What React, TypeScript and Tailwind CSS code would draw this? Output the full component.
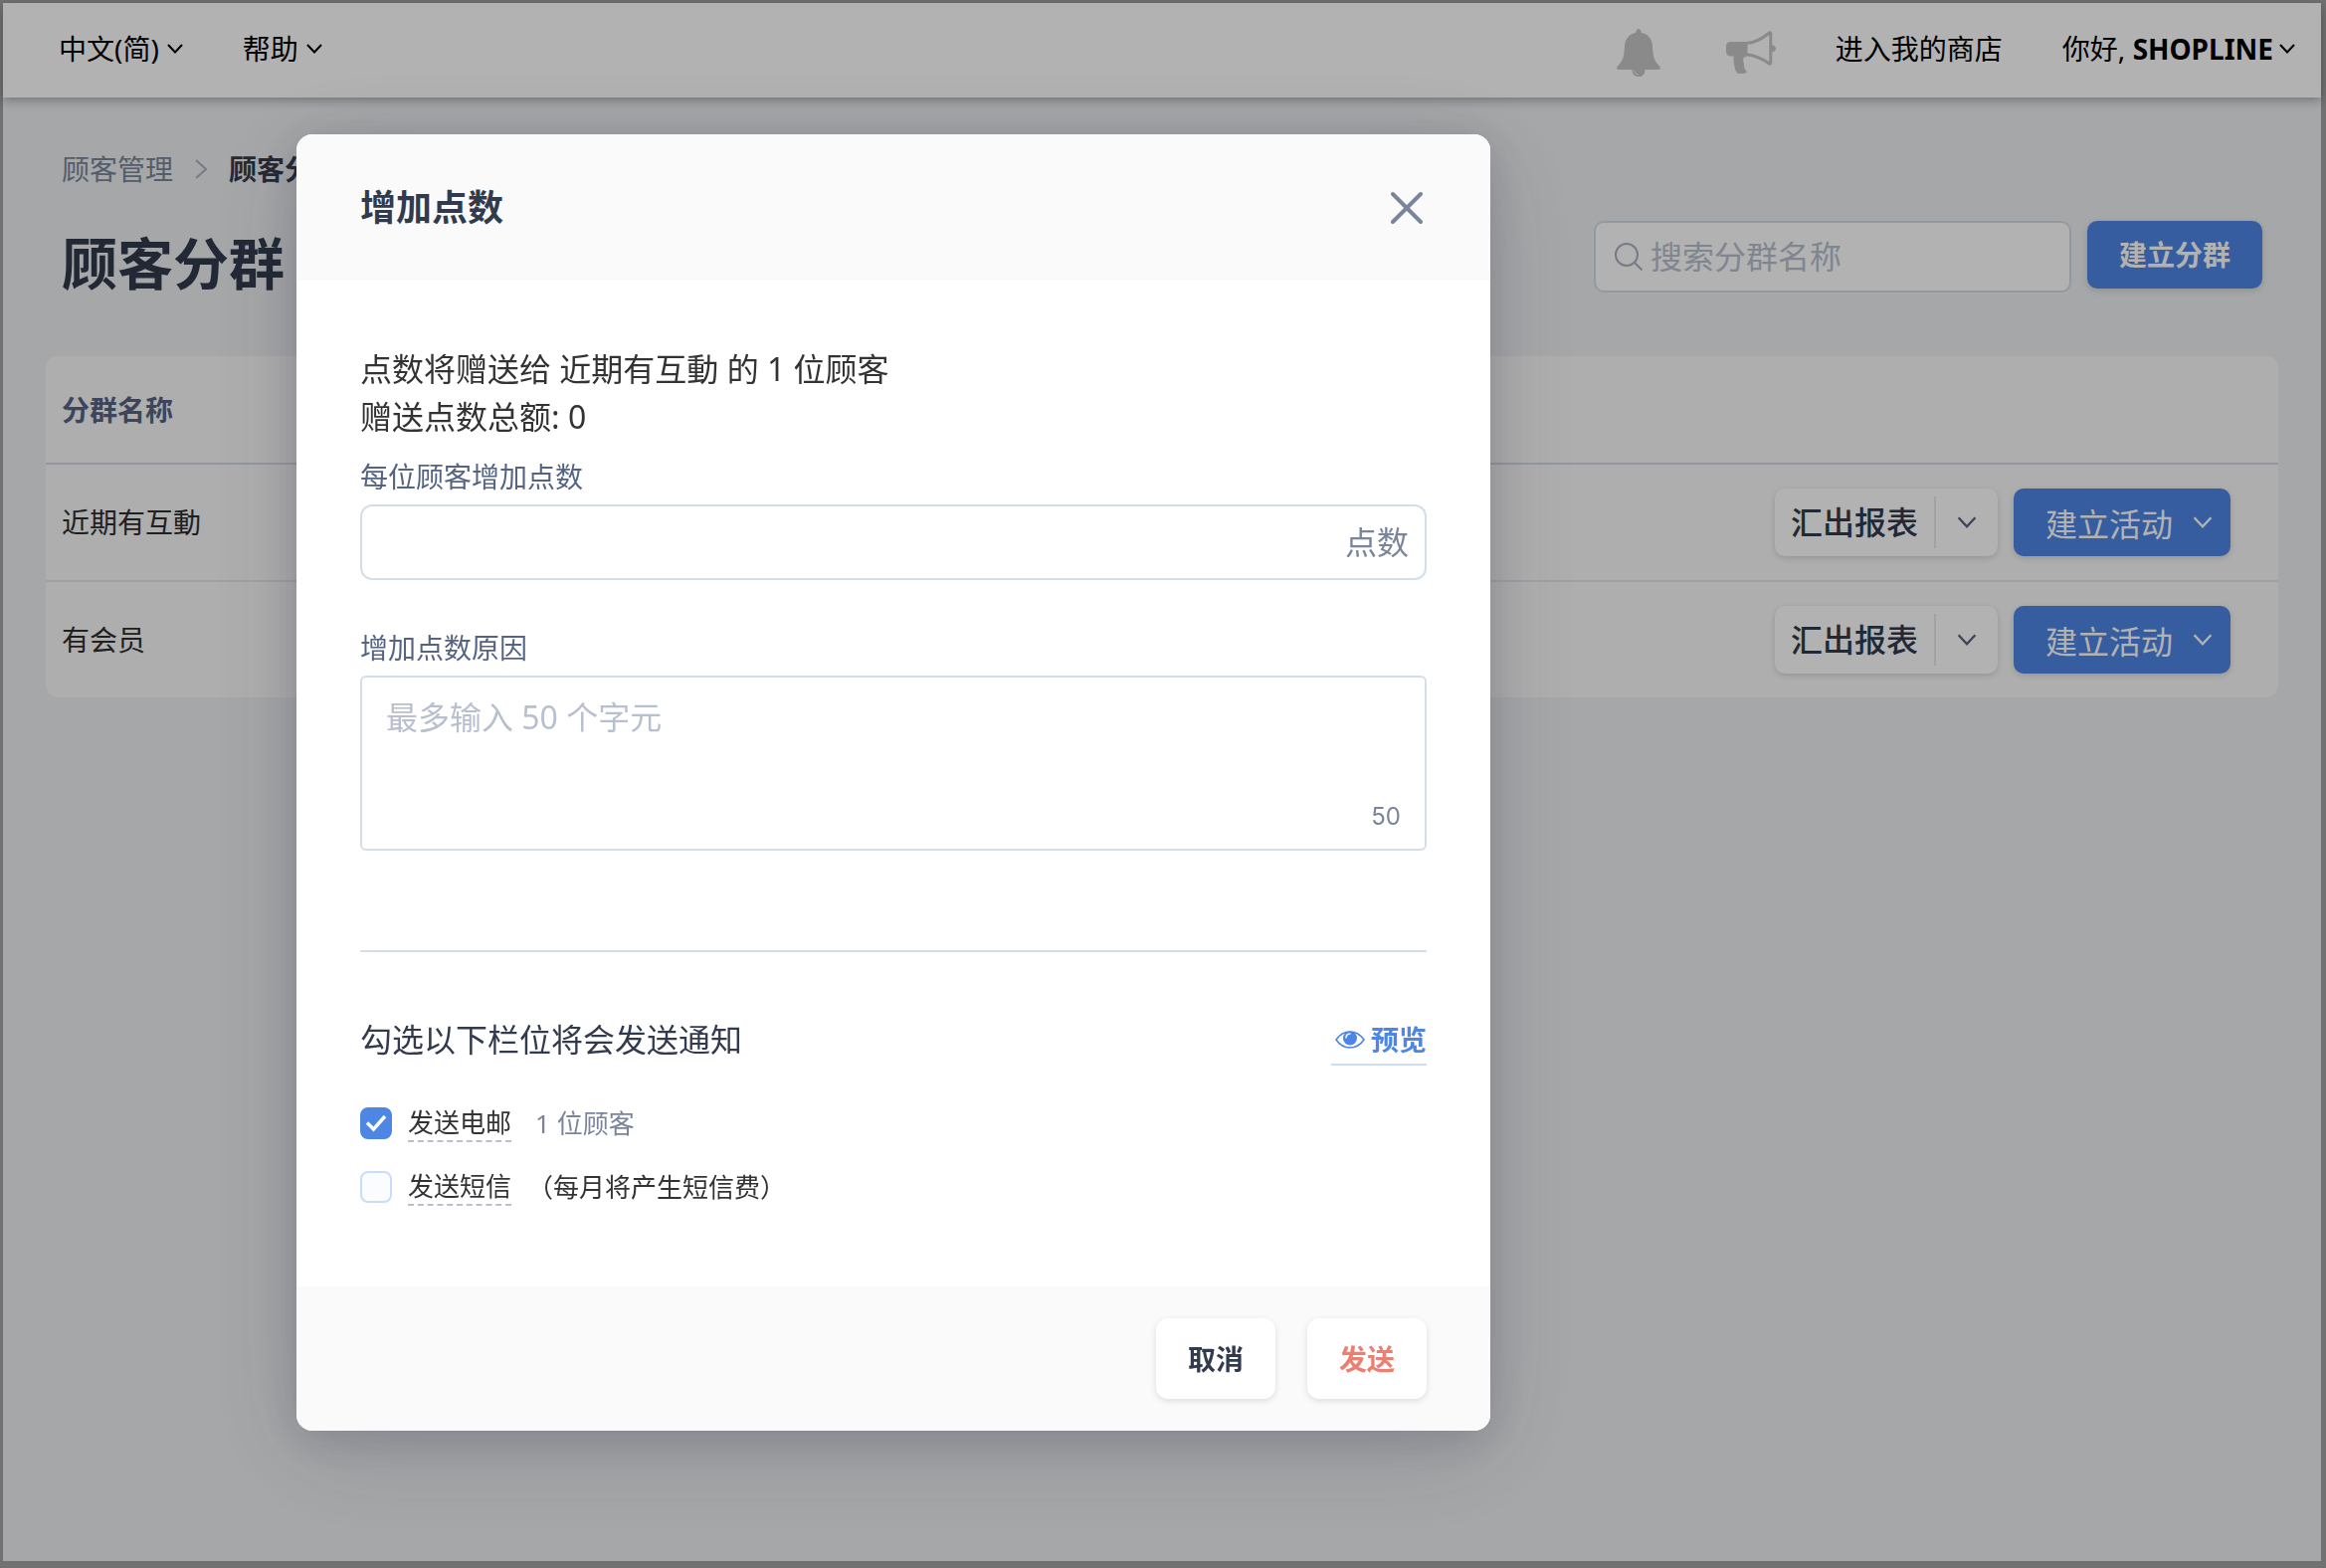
import { useState } from 'react';
import type { ReactNode } from 'react';

const groups = ['近期有互動', '有会员'];

const MAX_REASON = 50;

type IconProps = { className?: string };

function ChevronDown({ className }: IconProps) {
  return (
    <svg viewBox="0 0 16 10" className={className} fill="none" stroke="currentColor" strokeWidth="2" aria-hidden="true">
      <path d="M1 1l7 7.5L15 1" />
    </svg>
  );
}

function BellIcon({ className }: IconProps) {
  return (
    <svg viewBox="0 0 44 48" className={className} fill="currentColor" aria-hidden="true">
      <path d="M22 0c1.600 0 2.600 1.500 2.600 3.800C31 5 35.500 10 36 17c.5 11 1.500 15 7.500 21 1 1.500.2 3-1.800 3H2.300C.3 41-.5 39.500.5 38 6.500 32 7.500 28 8 17c.5-7 5-12 11.400-13.200C19.400 1.500 20.400 0 22 0z" />
      <path d="M15.500 41h13c0 4.500-2.700 7-6.500 7s-6.500-2.500-6.500-7z" />
      <path d="M17.500 41.500c.3 2.500 1.900 4.200 4.500 4.500" fill="none" stroke="#fff" strokeWidth="0.8" />
    </svg>
  );
}

function MegaphoneIcon({ className }: IconProps) {
  return (
    <svg viewBox="0 0 50 44" className={className} fill="currentColor" aria-hidden="true">
      <path d="M4.500 11H21.500v14.500H4.500C2 25.500 0 23.800 0 21v-5.500C0 12.700 2 11 4.500 11z" />
      <path d="M7.500 25h13c-4 2.500-3.600 4-3 6 1 4.500.2 6 2 8.500 1.500 1 1.800 2.500-.5 3-2.500.7-6 .8-7.500 0-1.500-.7-4-6-4-17.500z" />
      <path d="M21 12.300c9.500-.8 15.500-5 22.500-10.300.6-.4 1.300-.1 1.300.7v29.600c0 .8-.7 1.100-1.300.7C37 28.500 30.500 24.800 21 23.800" fill="none" stroke="currentColor" strokeWidth="3" strokeLinejoin="round" />
      <path d="M46 14.500c2.500 0 4 1.500 4 3.300s-1.500 3.400-4 3.400z" />
    </svg>
  );
}

function SearchIcon({ className }: IconProps) {
  return (
    <svg viewBox="0 0 28 28" className={className} fill="none" stroke="currentColor" strokeWidth="2" aria-hidden="true">
      <circle cx="12" cy="12" r="11" />
      <path d="M20 20l7.500 7.500" />
    </svg>
  );
}

function EyeIcon({ className }: IconProps) {
  return (
    <svg viewBox="0 0 30 18" className={className} aria-hidden="true">
      <path d="M1 9C4.500 4 9.500 1 15 1S25.500 4 29 9c-3.500 5-8.500 8-14 8S4.500 14 1 9z" fill="none" stroke="currentColor" strokeWidth="1.600" />
      <circle cx="15" cy="7.500" r="7" fill="currentColor" />
      <path d="M11 7c0-2.200 1.600-3.800 4-4" fill="none" stroke="#fff" strokeWidth="1.400" strokeLinecap="round" />
    </svg>
  );
}

function TopBar() {
  return (
    <header className="relative flex h-[95px] items-center justify-between bg-white pr-[26px] pb-1 pl-14 text-[28px] leading-10 text-black shadow-[0_3px_10px_rgba(0,0,0,0.3)]">
      <nav className="flex items-center gap-[60px]">
        <button className="flex items-center gap-2">
          中文(简)
          <ChevronDown className="h-[10px] w-4" />
        </button>
        <button className="flex items-center gap-2">
          帮助
          <ChevronDown className="h-[10px] w-4" />
        </button>
      </nav>
      <div className="flex items-center">
        <button aria-label="通知" className="mt-2 mr-[66px] text-[#c6c6c6]">
          <BellIcon className="h-12 w-11" />
        </button>
        <button aria-label="公告" className="mt-2 mr-[60px] text-[#c6c6c6]">
          <MegaphoneIcon className="h-11 w-[50px]" />
        </button>
        <a href="#store" className="mr-[60px]">
          进入我的商店
        </a>
        <button className="flex items-center gap-[6px]">
          <span>
            你好, <b>SHOPLINE</b>
          </span>
          <ChevronDown className="h-[10px] w-4" />
        </button>
      </div>
    </header>
  );
}

function GroupRow({ name }: { name: string }) {
  return (
    <tr className="h-[118px] border-b-2 border-[#e1e7ed] last:h-[117px] last:border-b-0">
      <td className="pl-4 text-[28px] text-[#2f2f2f]">{name}</td>
      <td className="pr-12">
        <div className="flex justify-end gap-4">
          <div className="flex h-[68px] items-center rounded-[10px] bg-white text-[#323b4d] shadow-[0_2px_6px_rgba(0,0,0,0.14)]">
            <button className="h-full px-4 text-[32px] font-medium">汇出报表</button>
            <span className="h-[52px] w-[2px] bg-[#e9e9e9]" />
            <button aria-label="更多报表选项" className="flex h-full w-[62px] items-center justify-center text-[#566484]">
              <ChevronDown className="h-3 w-5" />
            </button>
          </div>
          <button className="flex h-[68px] items-center gap-5 rounded-[10px] bg-[#4e86e4] pr-[18px] pl-8 text-[32px] text-white shadow-[0_2px_6px_rgba(0,0,0,0.14)]">
            <span className="mt-1">建立活动</span>
            <ChevronDown className="h-3 w-5" />
          </button>
        </div>
      </td>
    </tr>
  );
}

function GroupsPage() {
  return (
    <main className="px-[43px] pt-[52px]">
      <div className="flex items-end justify-between px-4">
        <div>
          <div className="flex items-center text-[28px] leading-10">
            <a href="#customers" className="text-[#7a8599]">
              顾客管理
            </a>
            <svg viewBox="0 0 12 20" className="mr-[22px] ml-[22px] h-5 w-3 text-[#a9b0c0]" fill="none" stroke="currentColor" strokeWidth="2" aria-hidden="true">
              <path d="M1 1l10 9-10 9" />
            </svg>
            <span className="font-bold text-[#323b4d]">顾客分群</span>
          </div>
          <h1 className="mt-[34px] text-[56px] leading-[80px] font-bold text-[#323b4d]">顾客分群</h1>
        </div>
        <div className="mb-[10px] flex items-start gap-4">
          <label className="flex h-[72px] w-[480px] items-center gap-2 rounded-[10px] border-2 border-[#d3dce6] bg-white pl-[19px]">
            <SearchIcon className="size-7 shrink-0 text-[#a9b0c0]" />
            <input
              type="search"
              aria-label="搜索分群名称"
              placeholder="搜索分群名称"
              className="w-full bg-transparent text-[32px] outline-none placeholder:text-[#b8bfcf]"
            />
          </label>
          <button className="h-[68px] w-44 rounded-[10px] bg-[#4e86e4] text-[28px] font-bold text-white shadow-[0_2px_6px_rgba(0,0,0,0.14)]">
            建立分群
          </button>
        </div>
      </div>

      <div className="mt-[54px] overflow-hidden rounded-xl bg-[#f9f9f9]">
        <table className="w-full border-collapse">
          <thead>
            <tr className="h-[108px] border-b-2 border-[#d1d9e5] text-left text-[28px] text-[#566484]">
              <th scope="col" className="pl-4 font-bold">
                分群名称
              </th>
              <th scope="col" aria-label="操作" />
            </tr>
          </thead>
          <tbody>
            {groups.map((name) => (
              <GroupRow key={name} name={name} />
            ))}
          </tbody>
        </table>
      </div>
    </main>
  );
}

type NotifyOptionProps = {
  id: string;
  label: string;
  checked: boolean;
  onChange: (checked: boolean) => void;
  children: ReactNode;
};

function NotifyOption({ id, label, checked, onChange, children }: NotifyOptionProps) {
  return (
    <div className="flex h-10 items-center text-[26px] leading-9 text-[#333]">
      <span className="relative flex size-8">
        <input
          id={id}
          type="checkbox"
          checked={checked}
          onChange={(e) => onChange(e.target.checked)}
          className="size-8 appearance-none rounded-lg border-2 border-[#c9dcfb] bg-[#fafcff] checked:border-[#4e86e4] checked:bg-[#4e86e4]"
        />
        {checked && (
          <svg viewBox="0 0 32 32" className="pointer-events-none absolute inset-0 text-white" fill="none" stroke="currentColor" strokeWidth="3.500" aria-hidden="true">
            <path d="M7 15.500l6.500 6.500L25 9" />
          </svg>
        )}
      </span>
      <label htmlFor={id} className="ml-4 border-b-2 border-dashed border-[#b8bfcf]">
        {label}
      </label>
      {children}
    </div>
  );
}

function AddPointsDialog() {
  const [points, setPoints] = useState('');
  const [reason, setReason] = useState('');
  const [email, setEmail] = useState(true);
  const [sms, setSms] = useState(false);

  return (
    <div
      role="dialog"
      aria-modal="true"
      aria-labelledby="dialog-title"
      className="w-full max-w-[1200px] overflow-hidden rounded-2xl bg-white shadow-[0_20px_100px_rgba(40,40,60,0.16),0_8px_40px_rgba(40,40,60,0.16)]"
    >
      <div className="flex h-[147px] items-center justify-between bg-[#fafafa] px-16">
        <h2 id="dialog-title" className="text-[36px] font-bold text-[#323b4d]">
          增加点数
        </h2>
        <button aria-label="关闭" className="mr-1 text-[#7a859b]">
          <svg viewBox="0 0 32 34" className="h-[34px] w-8" fill="none" stroke="currentColor" strokeWidth="4" strokeLinecap="round" aria-hidden="true">
            <path d="M2 3l28 28M30 3L2 31" />
          </svg>
        </button>
      </div>

      <div className="px-16 pt-[65px] pb-20">
        <p className="text-[32px] leading-[48px] text-[#333]">
          点数将赠送给 近期有互動 的 1 位顾客
          <br />
          赠送点数总额: {Number(points) || 0}
        </p>

        <label htmlFor="points" className="mt-4 block text-[28px] leading-10 text-[#566484]">
          每位顾客增加点数
        </label>
        <div className="mt-2 flex h-[76px] items-center rounded-xl border-2 border-[#d3dfe8] px-4">
          <input
            id="points"
            inputMode="numeric"
            value={points}
            onChange={(e) => setPoints(e.target.value)}
            className="h-full min-w-0 flex-1 text-[32px] outline-none"
          />
          <span className="text-[32px] text-[#7a859b]">点数</span>
        </div>

        <label htmlFor="reason" className="mt-12 block text-[28px] leading-10 text-[#566484]">
          增加点数原因
        </label>
        <div className="mt-2 flex h-[176px] flex-col rounded-md border-2 border-[#d3dfe8] px-6 pt-4 pb-3">
          <textarea
            id="reason"
            maxLength={MAX_REASON}
            value={reason}
            onChange={(e) => setReason(e.target.value)}
            placeholder="最多输入 50 个字元"
            className="w-full flex-1 resize-none text-[32px] leading-[48px] outline-none placeholder:text-[#b8bfcf]"
          />
          <span className="text-right font-['Inter','Noto_Sans_CJK_SC',sans-serif] text-[24px] leading-10 text-[#7a859b]">
            {MAX_REASON - reason.length}
          </span>
        </div>

        <hr className="mt-[100px] border-t-2 border-[#d3dfe8]" />

        <div className="mt-16 flex items-start justify-between">
          <h3 className="text-[32px] leading-[48px] text-[#323b4d]">勾选以下栏位将会发送通知</h3>
          <button className="flex h-[50px] items-center gap-[6px] border-b-2 border-[#c9dcfb] pl-1 text-[28px] font-bold text-[#4e86e4]">
            <EyeIcon className="h-[18px] w-[30px]" />
            预览
          </button>
        </div>

        <div className="mt-[38px] flex flex-col gap-6">
          <NotifyOption id="notify-email" label="发送电邮" checked={email} onChange={setEmail}>
            <span className="ml-6 text-[#7a859b]">1 位顾客</span>
          </NotifyOption>
          <NotifyOption id="notify-sms" label="发送短信" checked={sms} onChange={setSms}>
            <span className="ml-4">（每月将产生短信费）</span>
          </NotifyOption>
        </div>
      </div>

      <div className="flex justify-end gap-8 bg-[#fafafa] px-16 py-8 text-[28px] font-bold">
        <button className="h-[81px] w-[120px] rounded-xl bg-white text-[#323b4d] shadow-[0_2px_6px_rgba(0,0,0,0.12)]">取消</button>
        <button className="h-[81px] w-[120px] rounded-xl bg-white text-[#ea7f72] shadow-[0_2px_6px_rgba(0,0,0,0.12)]">发送</button>
      </div>
    </div>
  );
}

export default function App() {
  return (
    <div className="min-h-screen border-t-[3px] border-r-[5px] border-b-[7px] border-l-[3px] border-[#a2a2a2] bg-[#edeff1] font-['Noto_Sans','Noto_Sans_CJK_SC',sans-serif]">
      <TopBar />
      <GroupsPage />
      <div className="fixed inset-0 overflow-hidden bg-black/30 pt-[135px] pl-[298px]">
        <AddPointsDialog />
      </div>
    </div>
  );
}
